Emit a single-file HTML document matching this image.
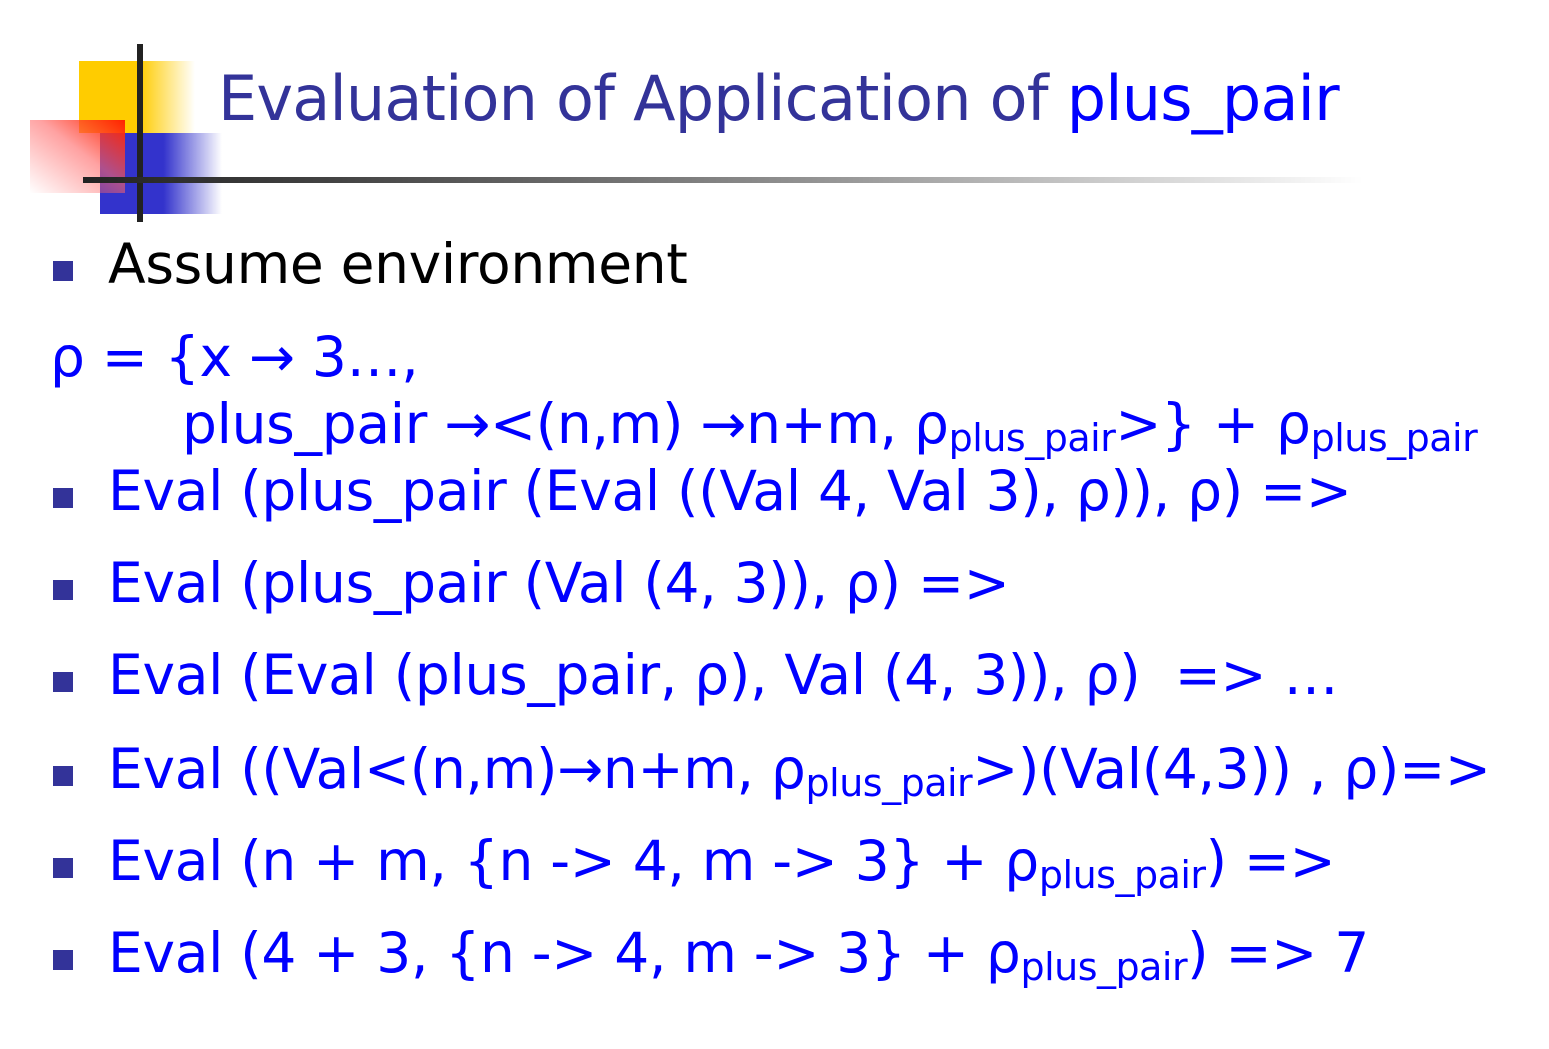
<!DOCTYPE html>
<html><head><meta charset="utf-8"><style>
body{margin:0;width:1549px;height:1049px;background:#fff;position:relative;overflow:hidden;font-family:"DejaVu Sans","Liberation Sans",sans-serif}
.a{position:absolute;white-space:nowrap;line-height:1}
.t{color:#333399;font-size:62px;left:218px;top:68px;letter-spacing:-0.8px}
.l{color:#0000ff;font-size:55px;letter-spacing:-0.3px;left:108px}
.b{position:absolute;left:53px;width:20px;height:20px;background:#333399}
sub{font-size:38px;vertical-align:-8px;letter-spacing:-0.5px}
</style></head><body>
<div class="a" style="left:79px;top:61px;width:116px;height:72px;background:linear-gradient(to right,#ffcc00 0,#ffcc00 52%,rgba(255,204,0,0) 100%)"></div>
<div class="a" style="left:100px;top:133px;width:122px;height:81px;background:linear-gradient(to right,#3333cc 0,#3333cc 52%,rgba(51,51,204,0) 100%)"></div>
<div class="a" style="left:30px;top:120px;width:95px;height:73px;background:linear-gradient(to bottom left,#ff2200 0,rgba(255,100,100,.6) 45%,rgba(255,255,255,0) 100%)"></div>
<div class="a" style="left:137px;top:44px;width:6px;height:178px;background:#222"></div>
<div class="a" style="left:83px;top:177px;width:1280px;height:6px;background:linear-gradient(to right,#222 0,#444 20%,#999 60%,rgba(255,255,255,0) 100%)"></div>
<div class="a t">Evaluation of Application of <span style="color:#0000ff">plus_pair</span></div>
<div class="b" style="top:261px"></div>
<div class="a l" style="top:237px;color:#000">Assume environment</div>
<div class="a l" style="left:50px;top:330px">ρ = {x → 3…,</div>
<div class="a l" style="left:182px;top:397px">plus_pair →&lt;(n,m) →n+m, ρ<sub>plus_pair</sub>&gt;} + ρ<sub>plus_pair</sub></div>
<div class="b" style="top:488px"></div>
<div class="a l" style="top:464px">Eval (plus_pair (Eval ((Val 4, Val 3), ρ)), ρ) =&gt;</div>
<div class="b" style="top:580px"></div>
<div class="a l" style="top:556px">Eval (plus_pair (Val (4, 3)), ρ) =&gt;</div>
<div class="b" style="top:672px"></div>
<div class="a l" style="top:648px">Eval (Eval (plus_pair, ρ), Val (4, 3)), ρ) &nbsp;=&gt; …</div>
<div class="b" style="top:766px"></div>
<div class="a l" style="top:742px">Eval ((Val&lt;(n,m)→n+m, ρ<sub>plus_pair</sub>&gt;)(Val(4,3)) , ρ)=&gt;</div>
<div class="b" style="top:858px"></div>
<div class="a l" style="top:834px">Eval (n + m, {n -&gt; 4, m -&gt; 3} + ρ<sub>plus_pair</sub>) =&gt;</div>
<div class="b" style="top:950px"></div>
<div class="a l" style="top:926px">Eval (4 + 3, {n -&gt; 4, m -&gt; 3} + ρ<sub>plus_pair</sub>) =&gt; 7</div>
</body></html>
